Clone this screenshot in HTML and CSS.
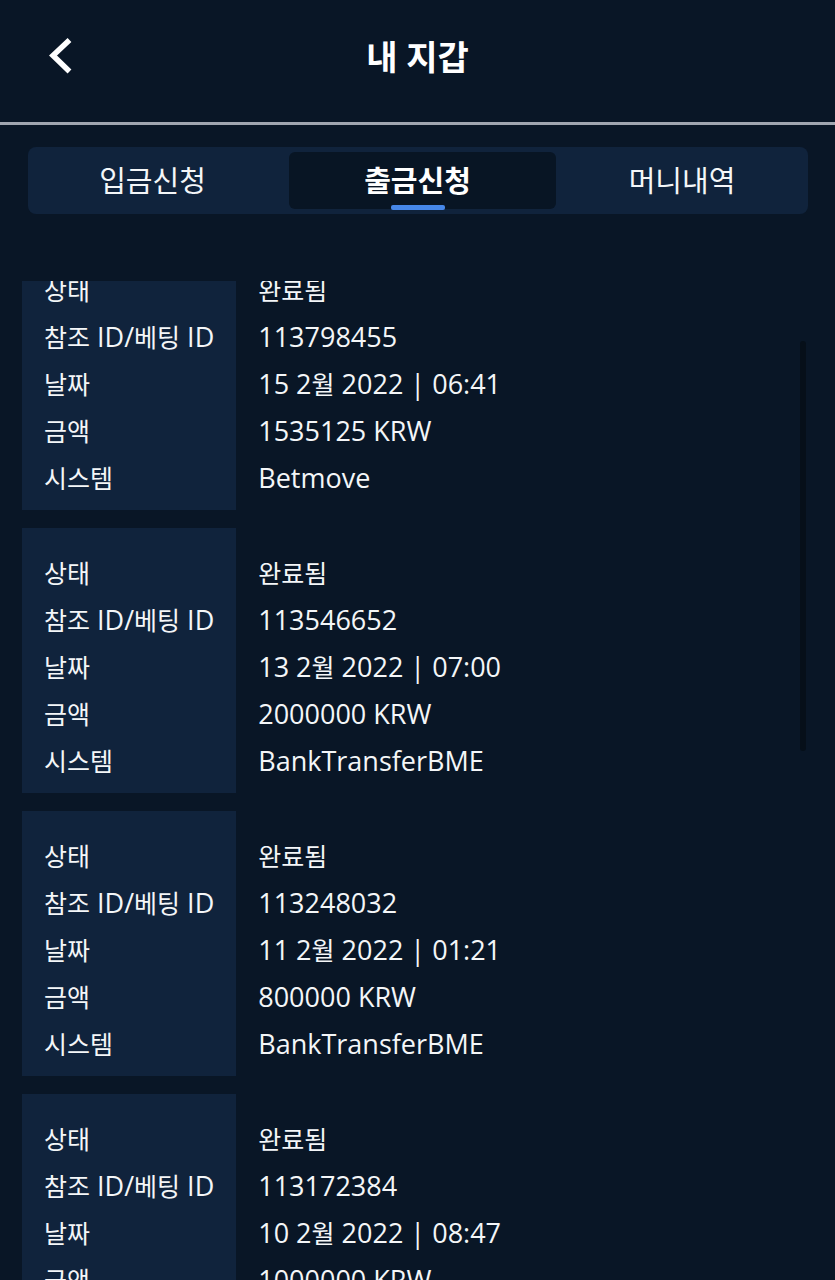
FILE: index.html
```html
<!DOCTYPE html>
<html lang="ko">
<head>
<meta charset="utf-8">
<meta name="viewport" content="width=device-width, initial-scale=1">
<title>내 지갑</title>
<link rel="stylesheet" href="styles.css">
</head>
<body>
<header class="header">
  <button class="back" type="button" aria-label="뒤로">
    <svg class="back-icon" viewBox="0 0 24 38" aria-hidden="true"><path d="M21.500 2 5 17.500 21.500 33.500" fill="none" stroke="currentColor" stroke-width="5.500"/></svg>
  </button>
  <h1 class="title">내 지갑</h1>
</header>
<main class="wallet">
  <nav class="tabs">
    <button class="tab tab-first" type="button">입금신청</button>
    <button class="tab tab-active" type="button" aria-current="page">출금신청</button>
    <button class="tab" type="button">머니내역</button>
  </nav>
  <section class="history">
    <div class="scroller">
      <table class="record">
        <tr><th scope="row"><span class="ko">상태</span></th><td><span class="ko">완료됨</span></td></tr>
        <tr><th scope="row"><span class="ko">참조</span> ID/<span class="ko">베팅</span> ID</th><td>113798455</td></tr>
        <tr><th scope="row"><span class="ko">날짜</span></th><td>15 2<span class="ko">월</span> 2022 | 06:41</td></tr>
        <tr><th scope="row"><span class="ko">금액</span></th><td>1535125 KRW</td></tr>
        <tr><th scope="row"><span class="ko">시스템</span></th><td>Betmove</td></tr>
      </table>
      <table class="record">
        <tr><th scope="row"><span class="ko">상태</span></th><td><span class="ko">완료됨</span></td></tr>
        <tr><th scope="row"><span class="ko">참조</span> ID/<span class="ko">베팅</span> ID</th><td>113546652</td></tr>
        <tr><th scope="row"><span class="ko">날짜</span></th><td>13 2<span class="ko">월</span> 2022 | 07:00</td></tr>
        <tr><th scope="row"><span class="ko">금액</span></th><td>2000000 KRW</td></tr>
        <tr><th scope="row"><span class="ko">시스템</span></th><td>BankTransferBME</td></tr>
      </table>
      <table class="record">
        <tr><th scope="row"><span class="ko">상태</span></th><td><span class="ko">완료됨</span></td></tr>
        <tr><th scope="row"><span class="ko">참조</span> ID/<span class="ko">베팅</span> ID</th><td>113248032</td></tr>
        <tr><th scope="row"><span class="ko">날짜</span></th><td>11 2<span class="ko">월</span> 2022 | 01:21</td></tr>
        <tr><th scope="row"><span class="ko">금액</span></th><td>800000 KRW</td></tr>
        <tr><th scope="row"><span class="ko">시스템</span></th><td>BankTransferBME</td></tr>
      </table>
      <table class="record">
        <tr><th scope="row"><span class="ko">상태</span></th><td><span class="ko">완료됨</span></td></tr>
        <tr><th scope="row"><span class="ko">참조</span> ID/<span class="ko">베팅</span> ID</th><td>113172384</td></tr>
        <tr><th scope="row"><span class="ko">날짜</span></th><td>10 2<span class="ko">월</span> 2022 | 08:47</td></tr>
        <tr><th scope="row"><span class="ko">금액</span></th><td>1000000 KRW</td></tr>
      </table>
    </div>
    <div class="scroll-thumb" aria-hidden="true"></div>
  </section>
</main>
<script src="script.js"></script>
</body>
</html>
```
FILE: styles.css
```css
* {
  box-sizing: border-box;
}

body {
  margin: 0;
  height: 100vh;
  display: flex;
  flex-direction: column;
  overflow: hidden;
  background: #091626;
  color: #f4f6f8;
  font-family: "Open Sans", "Noto Sans CJK KR", sans-serif;
  font-size: 27px;
}

button {
  margin: 0;
  padding: 0;
  border: 0;
  background: none;
  color: inherit;
  font: inherit;
}

.header {
  flex: none;
  display: grid;
  grid-template-columns: 72px 1fr 72px;
  align-items: center;
  padding: 0 0 8px;
  height: 125px;
  border-bottom: 3px solid #a0a6b0;
}

.back {
  display: flex;
  justify-content: flex-end;
  color: #fff;
}

.back-icon {
  width: 24px;
  height: 38px;
}

.title {
  margin: 0;
  text-align: center;
  font-size: 34px;
  line-height: 48px;
  font-weight: 700;
  color: #fff;
}

.wallet {
  flex: 1;
  min-height: 0;
  display: flex;
  flex-direction: column;
  padding-top: 22px;
}

.tabs {
  flex: none;
  display: grid;
  grid-template-columns: 261fr 267fr 252fr;
  margin: 0 27px 0 28px;
  padding: 5px 0;
  border-radius: 8px;
  background: #10233c;
}

.tab {
  height: 57px;
  border-radius: 6px;
  font-size: 29px;
  line-height: 57px;
}

.tab-first {
  padding-right: 12px;
}

.tab-active {
  position: relative;
  padding-right: 10px;
  background: #081524;
  color: #fff;
  font-weight: 700;
}

.tab-active::after {
  content: "";
  position: absolute;
  left: calc(50% - 32px);
  bottom: -1px;
  width: 54px;
  height: 5px;
  border-radius: 2px;
  background: #4687e8;
}

.history {
  position: relative;
  flex: 1;
  min-height: 0;
  margin-top: 67px;
  padding: 0 22px;
}

.scroller {
  height: 100%;
  overflow-y: auto;
  scrollbar-width: none;
}

.scroll-thumb {
  position: absolute;
  top: 60px;
  right: 29px;
  width: 6px;
  height: 41%;
  border-radius: 3px;
  background: #060f19;
}

.record {
  width: 100%;
  margin-bottom: 18px;
  border-collapse: collapse;
  line-height: 47px;
}

.record th,
.record td {
  padding: 0 22px;
  text-align: left;
  font-weight: 400;
  white-space: nowrap;
}

.record th {
  width: 214px;
  background: #10233c;
}

.record tr:first-child > * {
  padding-top: 21px;
}

.record tr:last-child > * {
  padding-bottom: 9px;
}

.ko {
  font-size: 25px;
  line-height: 1;
}
```
FILE: script.js
```js
document.querySelector(".scroller").scrollTop = 36;
```
